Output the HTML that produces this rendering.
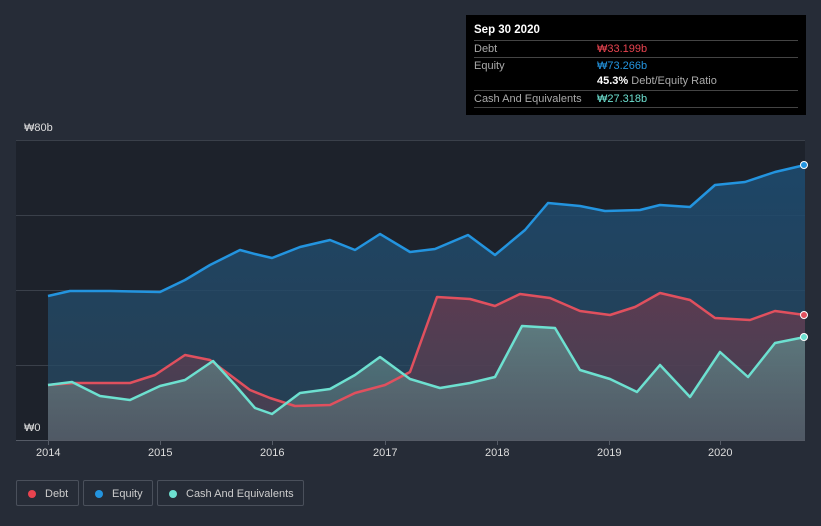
<!DOCTYPE html>
<html><head><meta charset="utf-8"><style>
html,body{margin:0;width:821px;height:526px;overflow:hidden}
body{background:#262c37;font-family:"Liberation Sans","Noto Sans CJK KR",sans-serif;position:relative}
.tt{position:absolute;left:466px;top:15px;width:340px;height:100px;background:#000;color:#fff;font-size:11px}
.tt .h{position:absolute;left:8px;top:9px;font-weight:bold;font-size:11.5px}
.row{position:absolute;left:8px;width:324px;border-top:1px solid #444;height:16px;line-height:16px;color:#aaa;white-space:nowrap}
.row span{position:absolute;left:123px}
.leg{position:absolute;top:480px;height:26px;border:1px solid #4a505b;border-radius:2px;color:#ccc;font-size:11px;line-height:26px;box-sizing:border-box;white-space:nowrap}
.leg i{position:absolute;left:11px;top:9px;width:8px;height:8px;border-radius:50%}
.ax{position:absolute;color:#ddd;font-size:11px}
</style></head><body>
<svg width="821" height="526" style="position:absolute;left:0;top:0">
<defs>
<linearGradient id="ge" x1="0" y1="0" x2="0" y2="1"><stop offset="0" stop-color="#1d4a6e" stop-opacity=".9"/><stop offset="1" stop-color="#2a4a62" stop-opacity=".7"/></linearGradient>
<linearGradient id="gd" x1="0" y1="0" x2="0" y2="1"><stop offset="0" stop-color="#6a3a4e" stop-opacity=".8"/><stop offset="1" stop-color="#5a4050" stop-opacity=".5"/></linearGradient>
<linearGradient id="gc" x1="0" y1="0" x2="0" y2="1"><stop offset="0" stop-color="#5e8a8a" stop-opacity=".8"/><stop offset="1" stop-color="#5a6a72" stop-opacity=".6"/></linearGradient>
</defs>
<rect x="16" y="140" width="789" height="300" fill="#1d222b"/>
<g stroke="#3a404a" stroke-width="1"><line x1="16" y1="140.5" x2="805" y2="140.5"/><line x1="16" y1="215.5" x2="805" y2="215.5"/><line x1="16" y1="290.5" x2="805" y2="290.5"/><line x1="16" y1="365.5" x2="805" y2="365.5"/></g>
<polygon fill="url(#ge)" points="48,440 48,296 70,291 110,291 160,292 185,280 210,265 240,250 255,254 272,258 300,247 330,240 355,250 380,234 410,252 435,249 468,235 495,255 525,230 548,203 580,206 605,211 640,210 660,205 690,207 715,185 745,182 775,172 805,165 805,440"/>
<polygon fill="url(#gd)" points="48,440 48,385 75,383 130,383 155,375 185,355 210,360 230,375 250,390 270,398 295,406 330,405 355,393 385,385 410,372 437,297 470,299 495,306 520,294 550,298 580,311 610,315 635,307 660,293 690,300 715,318 750,320 775,311 805,315 805,440"/>
<polygon fill="url(#gc)" points="48,440 48,385 72,382 100,396 130,400 160,386 185,380 213,361 235,385 255,408 272,414 300,393 330,389 355,375 380,357 410,379 440,388 470,383 495,377 522,326 555,328 580,370 610,379 637,392 660,365 690,397 720,352 748,377 775,343 805,337 805,440"/>
<g fill="none" stroke-width="2.5" stroke-linejoin="round">
<polyline stroke="#2394df" points="48,296 70,291 110,291 160,292 185,280 210,265 240,250 255,254 272,258 300,247 330,240 355,250 380,234 410,252 435,249 468,235 495,255 525,230 548,203 580,206 605,211 640,210 660,205 690,207 715,185 745,182 775,172 805,165"/>
<polyline stroke="#e0505e" points="48,385 75,383 130,383 155,375 185,355 210,360 230,375 250,390 270,398 295,406 330,405 355,393 385,385 410,372 437,297 470,299 495,306 520,294 550,298 580,311 610,315 635,307 660,293 690,300 715,318 750,320 775,311 805,315"/>
<polyline stroke="#6de0d0" points="48,385 72,382 100,396 130,400 160,386 185,380 213,361 235,385 255,408 272,414 300,393 330,389 355,375 380,357 410,379 440,388 470,383 495,377 522,326 555,328 580,370 610,379 637,392 660,365 690,397 720,352 748,377 775,343 805,337"/>
</g>
<circle cx="804" cy="165" r="3.5" fill="#2394df" stroke="#fff"/>
<circle cx="804" cy="315" r="3.5" fill="#e0505e" stroke="#fff"/>
<circle cx="804" cy="337" r="3.5" fill="#6de0d0" stroke="#fff"/>
<line x1="16" y1="440.5" x2="805" y2="440.5" stroke="#555b66"/>
<g stroke="#555b66"><line x1="48.5" y1="440" x2="48.5" y2="445"/><line x1="160.5" y1="440" x2="160.5" y2="445"/><line x1="272.5" y1="440" x2="272.5" y2="445"/><line x1="385.5" y1="440" x2="385.5" y2="445"/><line x1="497.5" y1="440" x2="497.5" y2="445"/><line x1="609.5" y1="440" x2="609.5" y2="445"/><line x1="720.5" y1="440" x2="720.5" y2="445"/></g>
</svg>
<div class="ax" style="left:24px;top:122px">₩80b</div>
<div class="ax" style="left:24px;top:422px">₩0</div>
<div class="ax" style="left:36px;top:447px">2014</div>
<div class="ax" style="left:148px;top:447px">2015</div>
<div class="ax" style="left:260px;top:447px">2016</div>
<div class="ax" style="left:373px;top:447px">2017</div>
<div class="ax" style="left:485px;top:447px">2018</div>
<div class="ax" style="left:597px;top:447px">2019</div>
<div class="ax" style="left:708px;top:447px">2020</div>
<div class="tt">
<div class="h">Sep 30 2020</div>
<div class="row" style="top:25px">Debt<span style="color:#e8434f">₩33.199b</span></div>
<div class="row" style="top:42px">Equity<span style="color:#2394df">₩73.266b</span></div>
<div class="row" style="top:58px;border:none"><span style="color:#aaa"><b style="color:#fff">45.3%</b> Debt/Equity Ratio</span></div>
<div class="row" style="top:75px">Cash And Equivalents<span style="color:#6de0d0">₩27.318b</span></div>
<div class="row" style="top:92px;height:0"></div>
</div>
<div class="leg" style="left:16px;width:63px"><i style="background:#e8434f"></i><span style="position:absolute;left:28px">Debt</span></div>
<div class="leg" style="left:83px;width:70px"><i style="background:#2394df"></i><span style="position:absolute;left:28px">Equity</span></div>
<div class="leg" style="left:157px;width:147px"><i style="background:#6de0d0"></i><span style="position:absolute;left:28px">Cash And Equivalents</span></div>
</body></html>
